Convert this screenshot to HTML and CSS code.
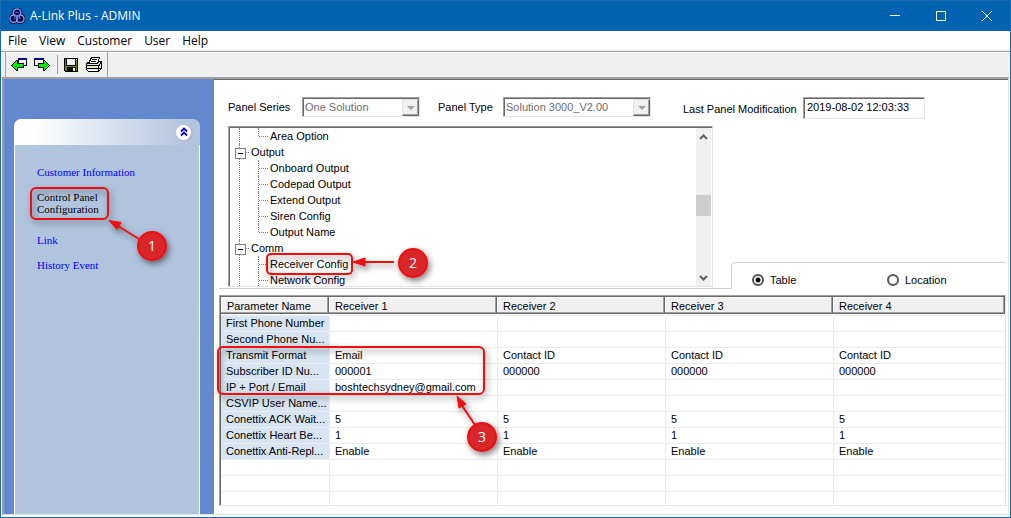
FILE: index.html
```html
<!DOCTYPE html>
<html lang="en">
<head>
<meta charset="utf-8">
<title>A-Link Plus - ADMIN</title>
<link rel="stylesheet" href="styles.css">
</head>
<body>
<div class="window">
  <header class="titlebar">
    <svg class="logo" width="16" height="16" viewBox="0 0 16 16" aria-hidden="true">
      <g fill="#10104a" stroke="#050528" stroke-width="3.600"><circle cx="8" cy="5" r="3.500"/><circle cx="4.800" cy="10.700" r="3.500"/><circle cx="11.200" cy="10.700" r="3.500"/></g>
      <g fill="none" stroke="#8c8cf4" stroke-width="1.500"><circle cx="8" cy="4.800" r="3.800"/><circle cx="4.800" cy="10.800" r="3.800"/><circle cx="11.200" cy="10.800" r="3.800"/></g>
      <path d="M5 11l2-4 1 4 2-4 1 4M6 5l2-1 2 1" fill="none" stroke="#6a6ae8"/>
    </svg>
    <h1 class="title">A-Link Plus - ADMIN</h1>
    <div class="captions">
      <button class="caption" aria-label="Minimize"><svg width="10" height="10" viewBox="0 0 10 10"><path d="M0 4.500h10"/></svg></button>
      <button class="caption" aria-label="Maximize"><svg width="10" height="10" viewBox="0 0 10 10"><path d="M.5.5h9v9h-9z"/></svg></button>
      <button class="caption" aria-label="Close"><svg width="10" height="10" viewBox="0 0 10 10"><path d="M0 0l10 10M10 0L0 10"/></svg></button>
    </div>
  </header>

  <nav class="menubar">
    <button class="menu">File</button>
    <button class="menu">View</button>
    <button class="menu">Customer</button>
    <button class="menu">User</button>
    <button class="menu">Help</button>
  </nav>

  <div class="toolbar">
    <div class="band">
      <button class="tool" aria-label="Back">
        <svg width="17" height="16" viewBox="0 0 17 16" shape-rendering="crispEdges">
          <path d="M7 1h9v8H7z" fill="#000"/><path d="M8 3h7v5H8z" fill="#fff"/><path d="M7 1h9v2H7z" fill="#000080"/>
          <path d="M0 8h1v-1h1v-1h1v-1h1v-1h1v-1h2v3h6v5H7v3H5v-1H4v-1H3v-1H2v-1H1V9H0z" fill="#000"/>
          <path d="M1 8h1V7h1V6h1V5h1V4h1v3h6v3H6v3H5v-1H4v-1H3v-1H2V9H1z" fill="#00f000"/>
        </svg>
      </button>
      <button class="tool" aria-label="Forward">
        <svg width="17" height="16" viewBox="0 0 17 16" shape-rendering="crispEdges">
          <path d="M0 1h10v8H0z" fill="#000"/><path d="M1 3h8v5H1z" fill="#fff"/><path d="M0 1h10v2H0z" fill="#000080"/>
          <path d="M16 8h-1V7h-1V6h-1V5h-1V4h-1V3H9v3H4v5h5v3h2v-1h1v-1h1v-1h1v-1h1V9h1z" fill="#000"/>
          <path d="M15 8h-1V7h-1V6h-1V5h-1V4h-1v3H5v3h5v3h1v-1h1v-1h1v-1h1V9h1z" fill="#00f000"/>
        </svg>
      </button>
      <span class="divider"></span>
      <button class="tool" aria-label="Save">
        <svg width="16" height="16" viewBox="0 0 16 16" shape-rendering="crispEdges">
          <path d="M0 1h14v14H1v-1H0z" fill="#000"/><path d="M1 2h12v12H2v-1H1z" fill="#808000"/>
          <path d="M2 1h10v8H2z" fill="#000"/><path d="M3 2h8v6H3z" fill="#f0f0f0"/>
          <path d="M3 10h9v5H3z" fill="#000"/><path d="M9 11h2v3H9zM12 2h1v1h-1z" fill="#f0f0f0"/>
        </svg>
      </button>
      <button class="tool" aria-label="Print">
        <svg width="17" height="16" viewBox="0 0 17 16" shape-rendering="crispEdges">
          <path d="M5.500.5h8l-2 6h-9z" fill="#fff" stroke="#000"/><path d="M6 2.500h5M5 4.500h5" stroke="#000"/>
          <path d="M3.500 5.500h-2l-1 2v5l2 2h10l3-3v-7h-3l-1 2h-9z" fill="#e8e8e8" stroke="#000"/>
          <path d="M1 8.500h12l2-3M1 11.500h11M12.500 9v5M13 11.500h2" fill="none" stroke="#000"/>
          <path d="M7 9h3v1H7z" fill="#ff0"/><path d="M3 13h8v1H3z" fill="#fff"/>
        </svg>
      </button>
    </div>
  </div>

  <div class="client">
    <aside class="sidebar">
      <div class="panel">
        <div class="panel-head">
          <button class="collapse" aria-label="Collapse"><svg width="8" height="10" viewBox="0 0 8 10"><path d="M1 4.500l3-3 3 3M1 8.500l3-3 3 3" fill="none" stroke="#0000c8" stroke-width="1.800"/></svg></button>
        </div>
        <nav class="links">
          <a href="#">Customer Information</a>
          <a href="#" class="current">Control Panel<br>Configuration</a>
          <a href="#">Link</a>
          <a href="#">History Event</a>
        </nav>
      </div>
    </aside>

    <main class="main">
      <form class="fields">
        <label for="series" class="series-label">Panel Series</label>
        <span class="combo combo-series"><select id="series" disabled><option>One Solution</option></select><span class="arrow"></span></span>
        <label for="type" class="type-label">Panel Type</label>
        <span class="combo combo-type"><select id="type" disabled><option>Solution 3000_V2.00</option></select><span class="arrow"></span></span>
        <label for="modified" class="date-label">Last Panel Modification</label>
        <input id="modified" class="date" type="text" value="2019-08-02 12:03:33" readonly>
      </form>

      <div class="middle">
        <div class="tree-side">
          <div class="tree">
            <ul class="nodes">
              <li class="root"><ul><li class="last">Area Option</li></ul></li>
              <li class="root"><span class="name">Output</span>
                <ul><li>Onboard Output</li><li>Codepad Output</li><li>Extend Output</li><li>Siren Config</li><li class="last">Output Name</li></ul>
              </li>
              <li class="root"><span class="name">Comm</span>
                <ul><li>Receiver Config</li><li>Network Config</li></ul>
              </li>
            </ul>
            <div class="scroll">
              <svg width="9" height="6" viewBox="0 0 9 6"><path d="M1 5l3.500-3.500L8 5"/></svg>
              <span class="thumb"></span>
              <svg width="9" height="6" viewBox="0 0 9 6"><path d="M1 1l3.500 3.500L8 1"/></svg>
            </div>
          </div>
        </div>
        <div class="view-tab">
          <label class="choice"><input type="radio" name="view" checked>Table</label>
          <label class="choice"><input type="radio" name="view">Location</label>
        </div>
      </div>

      <div class="list">
        <table class="grid">
          <colgroup><col class="col-name"><col class="col-data"><col class="col-data"><col class="col-data"><col></colgroup>
          <thead><tr><th>Parameter Name</th><th>Receiver 1</th><th>Receiver 2</th><th>Receiver 3</th><th>Receiver 4</th></tr></thead>
          <tbody>
            <tr><td class="param">First Phone Number</td><td></td><td></td><td></td><td></td></tr>
            <tr><td class="param">Second Phone Nu...</td><td></td><td></td><td></td><td></td></tr>
            <tr><td class="param">Transmit Format</td><td>Email</td><td>Contact ID</td><td>Contact ID</td><td>Contact ID</td></tr>
            <tr><td class="param">Subscriber ID Nu...</td><td>000001</td><td>000000</td><td>000000</td><td>000000</td></tr>
            <tr><td class="param">IP + Port / Email</td><td>boshtechsydney@gmail.com</td><td></td><td></td><td></td></tr>
            <tr><td class="param">CSVIP User Name...</td><td></td><td></td><td></td><td></td></tr>
            <tr><td class="param">Conettix ACK Wait...</td><td>5</td><td>5</td><td>5</td><td>5</td></tr>
            <tr><td class="param">Conettix Heart Be...</td><td>1</td><td>1</td><td>1</td><td>1</td></tr>
            <tr><td class="param">Conettix Anti-Repl...</td><td>Enable</td><td>Enable</td><td>Enable</td><td>Enable</td></tr>
            <tr><td></td><td></td><td></td><td></td><td></td></tr>
            <tr><td></td><td></td><td></td><td></td><td></td></tr>
            <tr><td></td><td></td><td></td><td></td><td></td></tr>
          </tbody>
        </table>
      </div>
    </main>
  </div>

  <svg class="callouts" width="1011" height="518" viewBox="0 0 1011 518">
    <defs>
      <filter id="shade" x="-20%" y="-30%" width="150%" height="170%"><feDropShadow dx="2" dy="3" stdDeviation="3" flood-color="#000" flood-opacity=".5"/></filter>
    </defs>
    <g class="marks" filter="url(#shade)">
      <rect x="31" y="188" width="77" height="31" rx="5"/>
      <rect x="267" y="254" width="85" height="20" rx="4"/>
      <rect x="218" y="347" width="266" height="47" rx="5"/>
      <path d="M139 239L118 226M394 262H364M475 425L461 404"/>
      <path class="tip" d="M109 220.500l12 2-4 7zM353 262l12-4v8zM457 396l9 8-7 4z"/>
      <circle cx="152" cy="246" r="14"/>
      <circle cx="413" cy="263" r="14"/>
      <circle cx="482" cy="437" r="14"/>
    </g>
    <g class="digits"><text x="152" y="251">1</text><text x="413" y="268">2</text><text x="482" y="442">3</text></g>
  </svg>
</div>
</body>
</html>
```
FILE: styles.css
```css
* { box-sizing: border-box; }

body {
  margin: 0;
  font: 11px/16px "Liberation Sans", Arial, sans-serif;
  color: #000;
}

button { border: 0; padding: 0; background: none; font: inherit; color: inherit; }

.window {
  position: relative;
  display: flex;
  flex-direction: column;
  min-height: 518px;
  height: 100vh;
  overflow: hidden;
  border: 1px solid #1a6cb2;
  background: #fff;
}

/* Title bar */
.titlebar { display: flex; align-items: center; height: 30px; padding-left: 8px; background: #0063b1; color: #fff; }
.logo { margin-right: 5px; }
.title { margin: 0; flex: 1; font: 12px/16px "Open Sans", "Noto Sans", sans-serif; }
.captions { display: flex; }
.caption { display: flex; align-items: center; justify-content: center; width: 46px; height: 28px; }
.caption path { fill: none; stroke: #fff; }

/* Menu */
.menubar { display: flex; gap: 12px; height: 20px; padding-left: 7px; border-bottom: 2px solid #f0f0f0; font: 12px/20px "Open Sans", "Noto Sans", sans-serif; }

/* Toolbar */
.toolbar { display: flex; height: 26px; padding-left: 4px; border-top: 1px solid #a0a0a0; background: #f0f0f0; box-shadow: inset 0 1px #fff; }
.band { display: flex; align-items: center; gap: 6px; padding: 0 4px 0 5px; border-left: 1px solid #a0a0a0; border-right: 1px solid #a0a0a0; }
.tool { display: flex; }
.divider { width: 1px; height: 19px; background: #a0a0a0; }

/* Client area */
.client {
  display: flex;
  flex: 1;
  min-height: 0;
  margin: 0 1px 2px;
  border: 2px solid;
  border-color: #a0a0a0 #e3e3e3 #e3e3e3 #a0a0a0;
  border-right-width: 1px;
  border-bottom-width: 1px;
}

/* Sidebar */
.sidebar { display: flex; flex: 0 0 210px; padding: 40px 14px 0 10px; background: #6388cd; }
.panel { display: flex; flex-direction: column; flex: 1; }
.panel-head { display: flex; align-items: center; justify-content: flex-end; height: 26px; padding-right: 9px; border-radius: 7px 7px 0 0; background: linear-gradient(90deg, #fff 10%, #b0c4de 95%); }
.collapse { display: flex; align-items: center; justify-content: center; width: 15px; height: 15px; border-radius: 8px; background: #fff; box-shadow: 1px 1px 1px 1px #bdb2d4; }
.links { display: flex; flex-direction: column; align-items: flex-start; gap: 13px; flex: 1; padding: 21px 0 0 22px; border: solid #fff; border-width: 0 1px; background: #b0c4de; font: 11px/12px "Liberation Serif", "Times New Roman", serif; }
.links a { color: #00f; text-decoration: none; }
.links a.current { margin-bottom: 6px; color: #000; }

/* Main area */
.main { display: flex; flex-direction: column; flex: 1; min-width: 0; padding: 18px 2px 8px 5px; box-shadow: inset 0 1px #696969; }
.fields { display: flex; align-items: flex-start; margin-bottom: 7px; padding-left: 9px; line-height: 20px; white-space: nowrap; }
.series-label { width: 74px; }
.type-label { width: 65px; margin-left: 18px; }
.date-label { width: 120px; margin-left: 32px; padding-top: 2px; }

.combo, .date, .tree, .list {
  border: 1px solid;
  border-color: #a0a0a0 #e3e3e3 #e3e3e3 #a0a0a0;
  box-shadow: inset 1px 1px #696969;
}
.combo { display: flex; height: 20px; padding: 1px 0 0 1px; }
.combo-series { width: 118px; }
.combo-type { width: 148px; }
.combo select { flex: 1; min-width: 0; appearance: none; border: 0; padding: 0 0 0 1px; background: none; font: inherit; line-height: 17px; color: #6d6d6d; opacity: 1; }
.arrow { display: flex; align-items: center; justify-content: center; width: 17px; border: 1px solid; border-color: #e3e3e3 #696969 #696969 #e3e3e3; background: #f0f0f0; box-shadow: inset -1px -1px #a0a0a0; }
.arrow::after { content: ""; border: solid transparent; border-width: 4px 4px 0; border-top-color: #a0a0a0; }
.date { width: 122px; height: 22px; padding: 0 3px 2px; font: inherit; }

.middle { display: flex; align-items: flex-end; }
.tree-side { flex: 1 1 512px; padding: 0 18px 1px 9px; border-bottom: 1px solid #d0d0d0; }
.tree { display: flex; height: 161px; padding: 1px 1px 0 1px; overflow: hidden; }
.tree ul { margin: 0; padding: 0; list-style: none; }
.nodes { flex: 1; }
.root { position: relative; padding-left: 21px; }
.root::before { content: ""; position: absolute; left: 9px; top: 0; bottom: 0; border-left: 1px dotted #808080; }
.root .name { display: block; }
.name::before { content: ""; position: absolute; left: 14px; top: 8px; width: 5px; border-top: 1px dotted #808080; }
.name::after { content: ""; position: absolute; left: 5px; top: 4px; width: 9px; height: 9px; border: 1px solid #808080; background: linear-gradient(#000, #000) center / 5px 1px no-repeat #fff; }
.root li { position: relative; padding-left: 19px; }
.root li::before { content: ""; position: absolute; left: 7px; top: 0; bottom: 0; border-left: 1px dotted #808080; }
.root li.last::before { bottom: 8px; }
.root li::after { content: ""; position: absolute; left: 8px; top: 8px; width: 9px; border-top: 1px dotted #808080; }

.scroll { display: flex; flex-direction: column; align-items: center; width: 15px; padding: 6px 0 5px; background: #f0f0f0; }
.scroll path { fill: none; stroke: #606060; stroke-width: 2; }
.thumb { width: 15px; height: 21px; margin: 55px 0 auto; background: #cdcdcd; }

.view-tab { display: flex; flex: 0 1 275px; height: 27px; padding: 5px 0 0 20px; border: solid #d0d0d0; border-width: 1px 0 0 1px; border-top-left-radius: 5px; line-height: 24px; }
.choice { display: flex; align-items: center; gap: 6px; flex: 0 0 135px; height: 24px; }
.choice:last-child { flex: 1; }
.choice input { appearance: none; width: 12px; height: 12px; margin: 0; border: 2px solid #555; border-radius: 6px; }
.choice input:checked { background: radial-gradient(circle, #000 2px, #fff 3px); }

/* Parameter list */
.list { flex: 1; min-height: 0; margin-top: 6px; padding: 1px 0 0 1px; overflow: hidden; }
.grid { width: 100%; table-layout: fixed; border-collapse: separate; border-spacing: 0; }
.col-name { width: 108px; }
.col-data { width: 168px; }
.grid th { height: 18px; padding: 0 6px; border: solid #fff; border-width: 0 0 1px; text-align: left; font-weight: normal; background: #f0f0f0; background-clip: padding-box; box-shadow: inset -1px -1px #696969, inset -2px -2px #a0a0a0, inset 1px 1px #fff; }
.grid td { height: 16px; padding: 0 5px; border: solid #ececec; border-width: 0 0 1px 1px; line-height: 15px; white-space: nowrap; }
.grid td:first-child { border-left: 0; }
.grid tbody tr:first-child td { height: 17px; border-top-width: 1px; }
.grid td.param { background: #d7e4f2; }

/* Numbered callouts drawn over the window */
.callouts { position: absolute; left: -1px; top: -1px; pointer-events: none; }
.marks { fill: none; stroke: #f00d0d; stroke-width: 2; }
.marks .tip { fill: #f00d0d; stroke-width: 1; }
.marks circle { fill: #d9252b; }
.digits { fill: #fff; font: 14px "Open Sans", sans-serif; text-anchor: middle; }
```
